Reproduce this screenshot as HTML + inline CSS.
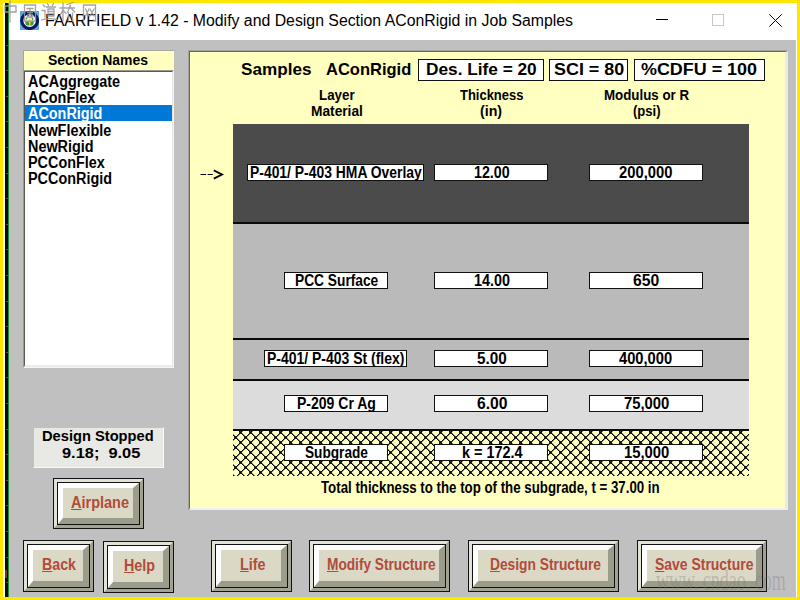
<!DOCTYPE html>
<html><head><meta charset="utf-8"><style>
html,body{margin:0;padding:0;width:800px;height:600px;overflow:hidden;background:#fff}
body{position:relative;font-family:"Liberation Sans",sans-serif}
.t{position:absolute;white-space:nowrap;transform-origin:0 0}
</style></head><body>
<div style="position:absolute;left:0px;top:0px;width:800px;height:600px;background:#FFE600"></div>
<div style="position:absolute;left:3px;top:3px;width:794px;height:594px;background:#FFFFFF"></div>
<div style="position:absolute;left:5px;top:3px;width:3px;height:594px;background:#0A0A0A"></div>
<div style="position:absolute;left:8px;top:3px;width:1px;height:594px;background:#1E8C3C"></div>
<div style="position:absolute;left:5px;top:570px;width:2px;height:8px;background:#8A2A18"></div>
<div style="position:absolute;left:6px;top:45px;width:2px;height:1px;background:#A02818"></div>
<div style="position:absolute;left:6px;top:70px;width:2px;height:1px;background:#A02818"></div>
<div style="position:absolute;left:6px;top:96px;width:2px;height:1px;background:#A02818"></div>
<div style="position:absolute;left:6px;top:121px;width:2px;height:1px;background:#A02818"></div>
<div style="position:absolute;left:6px;top:147px;width:2px;height:1px;background:#A02818"></div>
<div style="position:absolute;left:6px;top:173px;width:2px;height:1px;background:#A02818"></div>
<div style="position:absolute;left:6px;top:198px;width:2px;height:1px;background:#A02818"></div>
<div style="position:absolute;left:6px;top:224px;width:2px;height:1px;background:#A02818"></div>
<div style="position:absolute;left:6px;top:249px;width:2px;height:1px;background:#A02818"></div>
<div style="position:absolute;left:6px;top:275px;width:2px;height:1px;background:#A02818"></div>
<div style="position:absolute;left:6px;top:301px;width:2px;height:1px;background:#A02818"></div>
<div style="position:absolute;left:6px;top:326px;width:2px;height:1px;background:#A02818"></div>
<div style="position:absolute;left:6px;top:352px;width:2px;height:1px;background:#A02818"></div>
<div style="position:absolute;left:6px;top:377px;width:2px;height:1px;background:#A02818"></div>
<div style="position:absolute;left:6px;top:403px;width:2px;height:1px;background:#A02818"></div>
<div style="position:absolute;left:6px;top:429px;width:2px;height:1px;background:#A02818"></div>
<div style="position:absolute;left:6px;top:454px;width:2px;height:1px;background:#A02818"></div>
<div style="position:absolute;left:6px;top:480px;width:2px;height:1px;background:#A02818"></div>
<div style="position:absolute;left:6px;top:505px;width:2px;height:1px;background:#A02818"></div>
<div style="position:absolute;left:6px;top:531px;width:2px;height:1px;background:#A02818"></div>
<div style="position:absolute;left:6px;top:557px;width:2px;height:1px;background:#A02818"></div>
<div style="position:absolute;left:6px;top:582px;width:2px;height:1px;background:#A02818"></div>
<div style="position:absolute;left:9px;top:3px;width:788px;height:37px;background:#FFFFFF"></div>
<div style="position:absolute;left:9px;top:40px;width:787px;height:557px;background:#C0C0C0"></div>
<div style="position:absolute;left:796px;top:40px;width:1px;height:557px;background:#FFFFFF"></div>
<svg style="position:absolute;left:20px;top:11px" width="19" height="19" viewBox="0 0 19 19">
<rect width="19" height="19" fill="#5DA6DE"/>
<circle cx="9.6" cy="9.6" r="7.9" fill="#fff" stroke="#0A1660" stroke-width="3.2"/>
<path d="M7 4.5 L9 4 L8 6 Z M11 3.8 L12.5 5 L11.5 6 Z" fill="#0A1660"/>
<circle cx="6.5" cy="7.5" r="0.9" fill="#2E9A3A"/><circle cx="12.5" cy="8" r="0.9" fill="#2E9A3A"/>
<circle cx="10.4" cy="6.8" r="0.9" fill="#F0D000"/><circle cx="9.5" cy="8.6" r="0.8" fill="#F0D000"/>
<path d="M5 11 H14 L13 14 Q9.6 15.5 6 14 Z" fill="#2E9A3A"/>
<rect x="5" y="10" width="9" height="1.3" fill="#E0903A"/>
<rect x="9" y="10" width="1.6" height="5" fill="#F0D000"/>
</svg>
<div class="t" style="left:45.00px;top:12.86px;font-size:16px;line-height:16px;font-weight:400;color:#000;transform:scaleX(0.9895);">FAARFIELD v 1.42 - Modify and Design Section AConRigid in Job Samples</div>
<div style="position:absolute;left:656px;top:19px;width:12px;height:1px;background:#000"></div>
<div style="position:absolute;left:712px;top:14px;width:12px;height:12px;border:1px solid #C8C8C8;box-sizing:border-box"></div>
<svg style="position:absolute;left:769px;top:14px" width="13" height="13" viewBox="0 0 13 13">
<path d="M0.3 0.3 L12.7 12.7 M12.7 0.3 L0.3 12.7" stroke="#000" stroke-width="1"/></svg>
<div style="position:absolute;left:23px;top:50px;width:151px;height:20px;background:#FFFFC0;border-style:solid;border-width:1px 0 0 1px;border-color:#A6A6A6;box-sizing:border-box"></div>
<div class="t" style="left:48.00px;top:52.95px;font-size:14px;line-height:14px;font-weight:700;color:#000;transform:scaleX(0.9962);">Section Names</div>
<div style="position:absolute;left:23px;top:70px;width:151px;height:298px;background:#fff;border-style:solid;border-width:1px;border-color:#9A9A90 #F4F4F4 #F4F4F4 #9A9A90;box-sizing:border-box"></div>
<div style="position:absolute;left:24px;top:71px;width:149px;height:296px;background:#fff;border-style:solid;border-width:1px 1px 2px 1px;border-color:#5A5A50 #E4E4E4 #ECECEC #5A5A50;box-sizing:border-box"></div>
<div style="position:absolute;left:25px;top:105px;width:147px;height:16px;background:#0078D7"></div>
<div class="t" style="left:28.00px;top:73.66px;font-size:16px;line-height:16px;font-weight:700;color:#000;transform:scaleX(0.8998);">ACAggregate</div>
<div class="t" style="left:28.00px;top:89.96px;font-size:16px;line-height:16px;font-weight:700;color:#000;transform:scaleX(0.8998);">AConFlex</div>
<div class="t" style="left:28.00px;top:106.26px;font-size:16px;line-height:16px;font-weight:700;color:#fff;transform:scaleX(0.8998);">AConRigid</div>
<div class="t" style="left:28.00px;top:122.56px;font-size:16px;line-height:16px;font-weight:700;color:#000;transform:scaleX(0.8998);">NewFlexible</div>
<div class="t" style="left:28.00px;top:138.86px;font-size:16px;line-height:16px;font-weight:700;color:#000;transform:scaleX(0.8998);">NewRigid</div>
<div class="t" style="left:28.00px;top:155.16px;font-size:16px;line-height:16px;font-weight:700;color:#000;transform:scaleX(0.8998);">PCConFlex</div>
<div class="t" style="left:28.00px;top:171.46px;font-size:16px;line-height:16px;font-weight:700;color:#000;transform:scaleX(0.8998);">PCConRigid</div>
<div style="position:absolute;left:33px;top:427px;width:131px;height:41px;background:#E8E8E4;border-style:solid;border-width:1px;border-color:#C2C2BE #FAFAFA #FAFAFA #C2C2BE;box-sizing:border-box"></div>
<div class="t" style="left:42.00px;top:429.48px;font-size:14.2px;line-height:14.2px;font-weight:700;color:#000;transform:scaleX(1.0337);">Design Stopped</div>
<div class="t" style="left:61.60px;top:445.78px;font-size:14.2px;line-height:14.2px;font-weight:700;color:#000;transform:scaleX(1.1550);">9.18; &nbsp;9.05</div>
<div style="position:absolute;left:53px;top:478px;width:91px;height:51px;background:#111"></div><div style="position:absolute;left:54px;top:479px;width:89px;height:49px;border-style:solid;border-width:3px;border-color:#E2E2D8 #A2A292 #A2A292 #E2E2D8;box-sizing:border-box"></div><div style="position:absolute;left:57px;top:482px;width:83px;height:43px;background:#111"></div><div style="position:absolute;left:58px;top:483px;width:81px;height:41px;background:#DCD8C6;border-style:solid;border-width:5px 6px 6px 5px;border-color:#FFFFFF #9C9C8C #9C9C8C #FFFFFF;box-sizing:border-box"></div><div class="t" style="left:71.00px;top:494.79px;font-size:15.6px;line-height:15.6px;font-weight:700;color:#B04C3A;transform:scaleX(0.9295);text-underline-offset:1px"><u>A</u>irplane</div>
<div style="position:absolute;left:23px;top:540px;width:71px;height:52px;background:#111"></div><div style="position:absolute;left:24px;top:541px;width:69px;height:50px;border-style:solid;border-width:3px;border-color:#E2E2D8 #A2A292 #A2A292 #E2E2D8;box-sizing:border-box"></div><div style="position:absolute;left:27px;top:544px;width:63px;height:44px;background:#111"></div><div style="position:absolute;left:28px;top:545px;width:61px;height:42px;background:#DCD8C6;border-style:solid;border-width:5px 6px 6px 5px;border-color:#FFFFFF #9C9C8C #9C9C8C #FFFFFF;box-sizing:border-box"></div><div class="t" style="left:41.90px;top:556.99px;font-size:15.6px;line-height:15.6px;font-weight:700;color:#B04C3A;transform:scaleX(0.9100);text-underline-offset:1px"><u>B</u>ack</div>
<div style="position:absolute;left:103px;top:541px;width:71px;height:52px;background:#111"></div><div style="position:absolute;left:104px;top:542px;width:69px;height:50px;border-style:solid;border-width:3px;border-color:#E2E2D8 #A2A292 #A2A292 #E2E2D8;box-sizing:border-box"></div><div style="position:absolute;left:107px;top:545px;width:63px;height:44px;background:#111"></div><div style="position:absolute;left:108px;top:546px;width:61px;height:42px;background:#DCD8C6;border-style:solid;border-width:5px 6px 6px 5px;border-color:#FFFFFF #9C9C8C #9C9C8C #FFFFFF;box-sizing:border-box"></div><div class="t" style="left:123.60px;top:558.39px;font-size:15.6px;line-height:15.6px;font-weight:700;color:#B04C3A;transform:scaleX(0.9179);text-underline-offset:1px"><u>H</u>elp</div>
<div style="position:absolute;left:211px;top:540px;width:81px;height:52px;background:#111"></div><div style="position:absolute;left:212px;top:541px;width:79px;height:50px;border-style:solid;border-width:3px;border-color:#E2E2D8 #A2A292 #A2A292 #E2E2D8;box-sizing:border-box"></div><div style="position:absolute;left:215px;top:544px;width:73px;height:44px;background:#111"></div><div style="position:absolute;left:216px;top:545px;width:71px;height:42px;background:#DCD8C6;border-style:solid;border-width:5px 6px 6px 5px;border-color:#FFFFFF #9C9C8C #9C9C8C #FFFFFF;box-sizing:border-box"></div><div class="t" style="left:239.50px;top:556.99px;font-size:15.6px;line-height:15.6px;font-weight:700;color:#B04C3A;transform:scaleX(0.9219);text-underline-offset:1px"><u>L</u>ife</div>
<div style="position:absolute;left:309px;top:540px;width:141px;height:52px;background:#111"></div><div style="position:absolute;left:310px;top:541px;width:139px;height:50px;border-style:solid;border-width:3px;border-color:#E2E2D8 #A2A292 #A2A292 #E2E2D8;box-sizing:border-box"></div><div style="position:absolute;left:313px;top:544px;width:133px;height:44px;background:#111"></div><div style="position:absolute;left:314px;top:545px;width:131px;height:42px;background:#DCD8C6;border-style:solid;border-width:5px 6px 6px 5px;border-color:#FFFFFF #9C9C8C #9C9C8C #FFFFFF;box-sizing:border-box"></div><div class="t" style="left:327.00px;top:556.99px;font-size:15.6px;line-height:15.6px;font-weight:700;color:#B04C3A;transform:scaleX(0.8762);text-underline-offset:1px"><u>M</u>odify Structure</div>
<div style="position:absolute;left:468px;top:540px;width:151px;height:52px;background:#111"></div><div style="position:absolute;left:469px;top:541px;width:149px;height:50px;border-style:solid;border-width:3px;border-color:#E2E2D8 #A2A292 #A2A292 #E2E2D8;box-sizing:border-box"></div><div style="position:absolute;left:472px;top:544px;width:143px;height:44px;background:#111"></div><div style="position:absolute;left:473px;top:545px;width:141px;height:42px;background:#DCD8C6;border-style:solid;border-width:5px 6px 6px 5px;border-color:#FFFFFF #9C9C8C #9C9C8C #FFFFFF;box-sizing:border-box"></div><div class="t" style="left:489.50px;top:556.99px;font-size:15.6px;line-height:15.6px;font-weight:700;color:#B04C3A;transform:scaleX(0.8834);text-underline-offset:1px"><u>D</u>esign Structure</div>
<div style="position:absolute;left:637px;top:540px;width:130px;height:52px;background:#111"></div><div style="position:absolute;left:638px;top:541px;width:128px;height:50px;border-style:solid;border-width:3px;border-color:#E2E2D8 #A2A292 #A2A292 #E2E2D8;box-sizing:border-box"></div><div style="position:absolute;left:641px;top:544px;width:122px;height:44px;background:#111"></div><div style="position:absolute;left:642px;top:545px;width:120px;height:42px;background:#DCD8C6;border-style:solid;border-width:5px 6px 6px 5px;border-color:#FFFFFF #9C9C8C #9C9C8C #FFFFFF;box-sizing:border-box"></div><div class="t" style="left:654.50px;top:556.99px;font-size:15.6px;line-height:15.6px;font-weight:700;color:#B04C3A;transform:scaleX(0.8943);text-underline-offset:1px"><u>S</u>ave Structure</div>
<div style="position:absolute;left:188px;top:50px;width:599px;height:1px;background:#A4A49E"></div>
<div style="position:absolute;left:188px;top:50px;width:1px;height:460px;background:#A4A49E"></div>
<div style="position:absolute;left:189px;top:51px;width:599px;height:459px;background:#FFFFC0;border-top:1px solid #646460;border-left:1px solid #646460;border-right:3px solid #EAEAEA;border-bottom:2px solid #F0F0F0;box-sizing:border-box"></div>
<div class="t" style="left:240.50px;top:60.61px;font-size:17px;line-height:17px;font-weight:700;color:#000;transform:scaleX(1.0078);">Samples</div>
<div class="t" style="left:325.75px;top:60.61px;font-size:17px;line-height:17px;font-weight:700;color:#000;transform:scaleX(0.9709);">AConRigid</div>
<div style="position:absolute;left:418px;top:59px;width:126px;height:22px;background:#fff;border:1px solid #111;box-sizing:border-box"></div>
<div class="t" style="left:425.80px;top:61.96px;font-size:16px;line-height:16px;font-weight:700;color:#000;transform:scaleX(1.0777);">Des. Life = 20</div>
<div style="position:absolute;left:549px;top:59px;width:79px;height:22px;background:#fff;border:1px solid #111;box-sizing:border-box"></div>
<div class="t" style="left:553.80px;top:61.96px;font-size:16px;line-height:16px;font-weight:700;color:#000;transform:scaleX(1.1193);">SCI = 80</div>
<div style="position:absolute;left:634px;top:59px;width:131px;height:22px;background:#fff;border:1px solid #111;box-sizing:border-box"></div>
<div class="t" style="left:641.00px;top:61.96px;font-size:16px;line-height:16px;font-weight:700;color:#000;transform:scaleX(1.1197);">%CDFU = 100</div>
<div class="t" style="left:318.75px;top:86.65px;font-size:15.3px;line-height:15.3px;font-weight:700;color:#000;transform:scaleX(0.8727);">Layer</div>
<div class="t" style="left:310.60px;top:102.95px;font-size:15.3px;line-height:15.3px;font-weight:700;color:#000;transform:scaleX(0.8974);">Material</div>
<div class="t" style="left:459.50px;top:86.65px;font-size:15.3px;line-height:15.3px;font-weight:700;color:#000;transform:scaleX(0.8474);">Thickness</div>
<div class="t" style="left:479.60px;top:102.95px;font-size:15.3px;line-height:15.3px;font-weight:700;color:#000;transform:scaleX(0.9289);">(in)</div>
<div class="t" style="left:603.50px;top:86.65px;font-size:15.3px;line-height:15.3px;font-weight:700;color:#000;transform:scaleX(0.8704);">Modulus or R</div>
<div class="t" style="left:633.40px;top:102.95px;font-size:15.3px;line-height:15.3px;font-weight:700;color:#000;transform:scaleX(0.8549);">(psi)</div>
<div style="position:absolute;left:233px;top:124px;width:516px;height:98px;background:#4B4B4B"></div>
<div style="position:absolute;left:233px;top:222px;width:516px;height:2px;background:#0A0A0A"></div>
<div style="position:absolute;left:233px;top:224px;width:516px;height:114px;background:#BABABA"></div>
<div style="position:absolute;left:233px;top:338px;width:516px;height:2px;background:#0A0A0A"></div>
<div style="position:absolute;left:233px;top:340px;width:516px;height:39px;background:#BABABA"></div>
<div style="position:absolute;left:233px;top:379px;width:516px;height:2px;background:#0A0A0A"></div>
<div style="position:absolute;left:233px;top:381px;width:516px;height:48px;background:#DCDCDC"></div>
<div style="position:absolute;left:233px;top:429px;width:516px;height:2px;background:#0A0A0A"></div>
<svg style="position:absolute;left:233px;top:431px" width="516" height="45" shape-rendering="crispEdges">
<defs><pattern id="h" patternUnits="userSpaceOnUse" width="10" height="10" x="-233" y="-429">
<g fill="#84846C"><rect x="1" y="0" width="1" height="1"/><rect x="1" y="0" width="1" height="1"/><rect x="2" y="1" width="1" height="1"/><rect x="2" y="9" width="1" height="1"/><rect x="3" y="2" width="1" height="1"/><rect x="3" y="8" width="1" height="1"/><rect x="4" y="3" width="1" height="1"/><rect x="4" y="7" width="1" height="1"/><rect x="5" y="4" width="1" height="1"/><rect x="5" y="6" width="1" height="1"/><rect x="6" y="5" width="1" height="1"/><rect x="6" y="5" width="1" height="1"/><rect x="7" y="6" width="1" height="1"/><rect x="7" y="4" width="1" height="1"/><rect x="8" y="7" width="1" height="1"/><rect x="8" y="3" width="1" height="1"/><rect x="9" y="8" width="1" height="1"/><rect x="9" y="2" width="1" height="1"/><rect x="0" y="9" width="1" height="1"/><rect x="0" y="1" width="1" height="1"/></g><g fill="#000"><rect x="0" y="0" width="1" height="1"/><rect x="0" y="0" width="1" height="1"/><rect x="1" y="1" width="1" height="1"/><rect x="1" y="9" width="1" height="1"/><rect x="2" y="2" width="1" height="1"/><rect x="2" y="8" width="1" height="1"/><rect x="3" y="3" width="1" height="1"/><rect x="3" y="7" width="1" height="1"/><rect x="4" y="4" width="1" height="1"/><rect x="4" y="6" width="1" height="1"/><rect x="5" y="5" width="1" height="1"/><rect x="5" y="5" width="1" height="1"/><rect x="6" y="6" width="1" height="1"/><rect x="6" y="4" width="1" height="1"/><rect x="7" y="7" width="1" height="1"/><rect x="7" y="3" width="1" height="1"/><rect x="8" y="8" width="1" height="1"/><rect x="8" y="2" width="1" height="1"/><rect x="9" y="9" width="1" height="1"/><rect x="9" y="1" width="1" height="1"/></g><g fill="#303028"><rect x="1" y="0" width="1" height="1"/><rect x="9" y="0" width="1" height="1"/><rect x="0" y="1" width="1" height="1"/><rect x="0" y="9" width="1" height="1"/><rect x="6" y="5" width="1" height="1"/><rect x="4" y="5" width="1" height="1"/><rect x="5" y="6" width="1" height="1"/><rect x="5" y="4" width="1" height="1"/></g>
</pattern></defs><rect width="516" height="45" fill="url(#h)"/></svg>
<svg style="position:absolute;left:196px;top:164px" width="32" height="20"><path d="M4.5 10.5 H10.2 M11.6 10.5 H16.8" stroke="#000" stroke-width="1.2"/><path d="M17.8 6.4 L26 10.5 L17.8 14.6" fill="none" stroke="#000" stroke-width="1.8"/></svg>
<div style="position:absolute;left:247px;top:164px;width:177px;height:17px;background:#fff;border:1px solid #111;box-sizing:border-box"></div>
<div style="position:absolute;left:434px;top:164px;width:114px;height:17px;background:#fff;border:1px solid #111;box-sizing:border-box"></div>
<div style="position:absolute;left:589px;top:164px;width:114px;height:17px;background:#fff;border:1px solid #111;box-sizing:border-box"></div>
<div class="t" style="left:250.00px;top:163.70px;font-size:16.3px;line-height:16.3px;font-weight:700;color:#000;transform:scaleX(0.8537);">P-401/ P-403 HMA Overlay</div>
<div class="t" style="left:474.00px;top:163.70px;font-size:16.3px;line-height:16.3px;font-weight:700;color:#000;transform:scaleX(0.8743);">12.00</div>
<div class="t" style="left:619.00px;top:163.70px;font-size:16.3px;line-height:16.3px;font-weight:700;color:#000;transform:scaleX(0.9079);">200,000</div>
<div style="position:absolute;left:284px;top:272px;width:104px;height:17px;background:#fff;border:1px solid #111;box-sizing:border-box"></div>
<div style="position:absolute;left:434px;top:272px;width:114px;height:17px;background:#fff;border:1px solid #111;box-sizing:border-box"></div>
<div style="position:absolute;left:589px;top:272px;width:114px;height:17px;background:#fff;border:1px solid #111;box-sizing:border-box"></div>
<div class="t" style="left:295.00px;top:271.70px;font-size:16.3px;line-height:16.3px;font-weight:700;color:#000;transform:scaleX(0.8443);">PCC Surface</div>
<div class="t" style="left:473.75px;top:271.70px;font-size:16.3px;line-height:16.3px;font-weight:700;color:#000;transform:scaleX(0.8829);">14.00</div>
<div class="t" style="left:633.00px;top:271.70px;font-size:16.3px;line-height:16.3px;font-weight:700;color:#000;transform:scaleX(0.9662);">650</div>
<div style="position:absolute;left:264px;top:350px;width:143px;height:17px;background:#fff;border:1px solid #111;box-sizing:border-box"></div>
<div style="position:absolute;left:434px;top:350px;width:114px;height:17px;background:#fff;border:1px solid #111;box-sizing:border-box"></div>
<div style="position:absolute;left:589px;top:350px;width:114px;height:17px;background:#fff;border:1px solid #111;box-sizing:border-box"></div>
<div class="t" style="left:267.40px;top:349.70px;font-size:16.3px;line-height:16.3px;font-weight:700;color:#000;transform:scaleX(0.8579);">P-401/ P-403 St (flex)</div>
<div class="t" style="left:477.25px;top:349.70px;font-size:16.3px;line-height:16.3px;font-weight:700;color:#000;transform:scaleX(0.9384);">5.00</div>
<div class="t" style="left:619.00px;top:349.70px;font-size:16.3px;line-height:16.3px;font-weight:700;color:#000;transform:scaleX(0.9029);">400,000</div>
<div style="position:absolute;left:284px;top:395px;width:104px;height:17px;background:#fff;border:1px solid #111;box-sizing:border-box"></div>
<div style="position:absolute;left:434px;top:395px;width:114px;height:17px;background:#fff;border:1px solid #111;box-sizing:border-box"></div>
<div style="position:absolute;left:589px;top:395px;width:114px;height:17px;background:#fff;border:1px solid #111;box-sizing:border-box"></div>
<div class="t" style="left:297.00px;top:394.70px;font-size:16.3px;line-height:16.3px;font-weight:700;color:#000;transform:scaleX(0.8609);">P-209 Cr Ag</div>
<div class="t" style="left:476.50px;top:394.70px;font-size:16.3px;line-height:16.3px;font-weight:700;color:#000;transform:scaleX(0.9620);">6.00</div>
<div class="t" style="left:623.60px;top:394.70px;font-size:16.3px;line-height:16.3px;font-weight:700;color:#000;transform:scaleX(0.9102);">75,000</div>
<div style="position:absolute;left:284px;top:444px;width:104px;height:17px;background:#fff;border:1px solid #111;box-sizing:border-box"></div>
<div style="position:absolute;left:434px;top:444px;width:114px;height:17px;background:#fff;border:1px solid #111;box-sizing:border-box"></div>
<div style="position:absolute;left:589px;top:444px;width:114px;height:17px;background:#fff;border:1px solid #111;box-sizing:border-box"></div>
<div class="t" style="left:305.00px;top:443.70px;font-size:16.3px;line-height:16.3px;font-weight:700;color:#000;transform:scaleX(0.8384);">Subgrade</div>
<div class="t" style="left:462.20px;top:443.70px;font-size:16.3px;line-height:16.3px;font-weight:700;color:#000;transform:scaleX(0.8845);">k = 172.4</div>
<div class="t" style="left:623.60px;top:443.70px;font-size:16.3px;line-height:16.3px;font-weight:700;color:#000;transform:scaleX(0.9102);">15,000</div>
<div class="t" style="left:320.60px;top:479.79px;font-size:15.6px;line-height:15.6px;font-weight:700;color:#000;transform:scaleX(0.8512);">Total thickness to the top of the subgrade, t = 37.00 in</div>
<svg style="position:absolute;left:0;top:0" width="100" height="25" viewBox="0 0 100 25">
<g fill="none" stroke="#9A9A9A" stroke-width="1.3" stroke-linecap="round" opacity="0.9">
<path d="M5 6 H16 V12 H5 Z M10 1 V22"/>
<path d="M24.5 5 H35.5 V21 H24.5 Z M27 8.5 H33 M27.5 12.5 H32.5 M27 17 H33 M30 8.5 V17 M32 14.5 L33 15.5"/>
<path d="M43 5 L44.5 6.5 M42 10.5 H45 V17 M41.5 20 Q48 17.5 56.5 19.5 M47.5 3.5 L48.5 5.5 M53.5 3.5 L52.5 5.5 M46 7 H55.5 M48 9 H54 V16 H48 Z M48 11.5 H54 M48 13.8 H54"/>
<path d="M60 8 H66 M63 3 V21 M63 9.5 L60 16 M63 10 L66 13.5 M67 4.5 Q70 3.5 73.5 2.5 M66 8 H74.5 M70.5 5 L67.5 12.5 M70.5 7.5 L74.5 12 M68.5 13 V21 M72.5 13 V21"/>
<path d="M83.5 21 V5 H95.5 V21 L93.5 20 M85.5 9 L89 16 M89 9 L85.5 16 M90 9 L94 16 M94 9 L90 16"/>
</g></svg>
<div style="position:absolute;left:656px;top:565px;font-family:'Liberation Serif',serif;font-size:29px;line-height:30px;color:rgba(120,120,120,0.34);white-space:nowrap;transform-origin:0 0;transform:scaleX(0.62)">www. cndao. com</div>
</body></html>
